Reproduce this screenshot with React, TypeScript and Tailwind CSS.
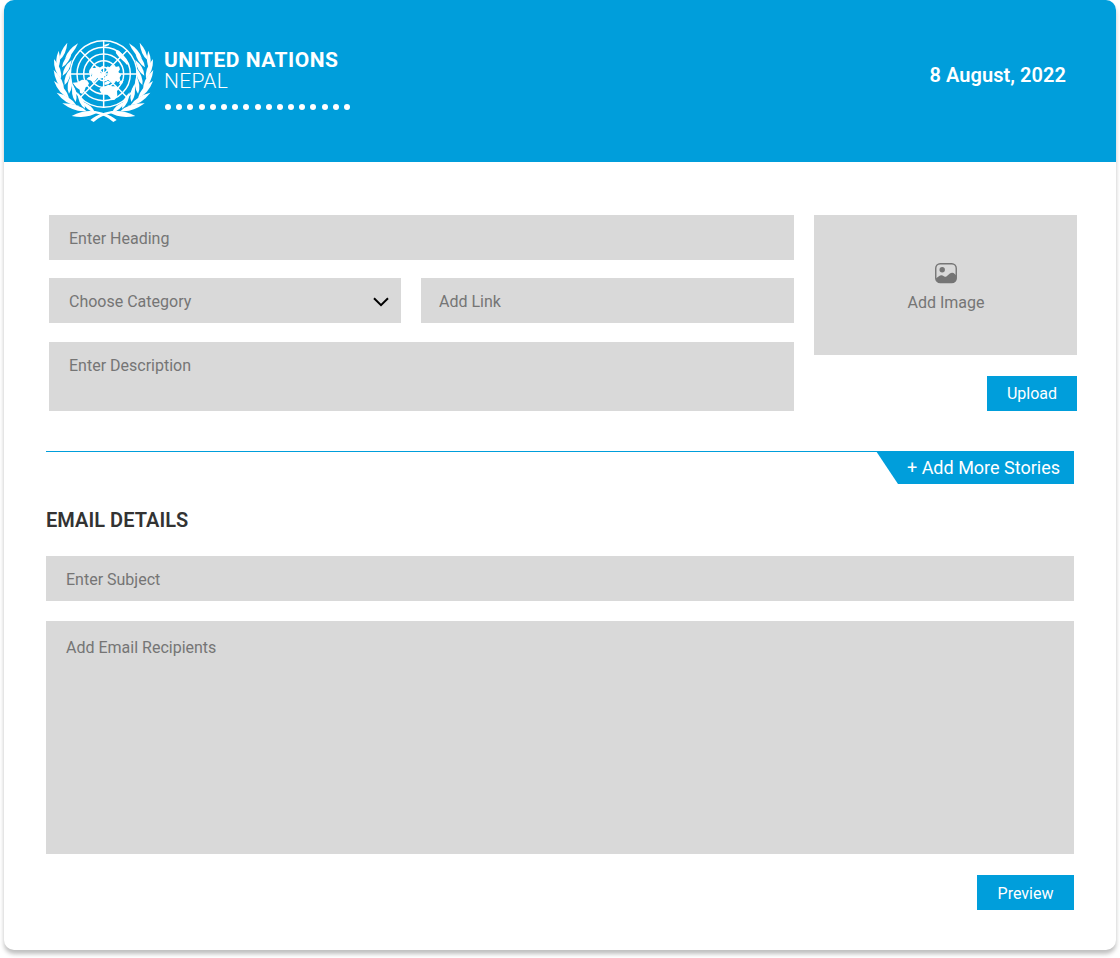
import React from "react";

type Leaf = [number, number, number, number, number];

// Each leaf runs from its base to its tip, with a half-width.
const leaves: Leaf[] = [
  [60, 86, 99, 40, 7.5],
  [44, 90, 67, 38, 7.5],
  [51, 112, 81, 66, 8],
  [38, 116, 41, 62, 7.5],
  [53, 137, 80, 90, 8.5],
  [48, 146, 27, 87, 9.5],
  [59, 165, 77, 114, 8.5],
  [57, 180, 26, 120, 10],
  [72, 191, 77, 139, 8.5],
  [72, 204, 27, 153, 10],
  [92, 216, 83, 163, 8.5],
  [94, 226, 35, 188, 10],
  [120, 236, 97, 187, 8.5],
  [124, 243, 52, 220, 10],
  [150, 248, 110, 214, 8],
  [158, 247, 80, 258, 10.5],
];

function leafPath([x1, y1, x2, y2, w]: Leaf) {
  const dx = x2 - x1;
  const dy = y2 - y1;
  const len = Math.hypot(dx, dy);
  const nx = (-dy / len) * w * 1.5;
  const ny = (dx / len) * w * 1.5;
  const mx = x1 + dx * 0.42;
  const my = y1 + dy * 0.42;
  return `M${x1} ${y1}Q${mx + nx} ${my + ny} ${x2} ${y2}Q${mx - nx} ${my - ny} ${x1} ${y1}Z`;
}

function Branch() {
  return (
    <g fill="#fff">
      {leaves.map((leaf, i) => (
        <path key={i} d={leafPath(leaf)} />
      ))}
      <path d="M140 242C168 244 194 253 215 270L205 276C190 262 168 251 140 248Z" />
    </g>
  );
}

function Emblem() {
  return (
    <svg className="h-[84px] w-[102px] shrink-0" viewBox="24 27 306 252" aria-hidden="true">
      <g fill="none" stroke="#fff" strokeWidth="4.4">
        <circle cx="176" cy="132" r="100" />
        <circle cx="176" cy="132" r="80" />
        <circle cx="176" cy="132" r="60" />
        <circle cx="176" cy="132" r="40" />
        <circle cx="176" cy="132" r="20" />
        <path d="M176 32V232M76 132H276M105 61L247 203M247 61L105 203" />
      </g>
      <g fill="#fff">
        <path d="M133 120L140 113L150 114L158 109L166 113L172 107L177 114L169 119L166 127L172 134L176 143L166 146L158 143L153 149L144 146L139 139L143 132L132 128Z" />
        <path d="M183 116L188 109L196 113L202 106L211 111L222 109L225 118L220 126L229 134L224 143L226 152L218 157L211 151L205 158L196 154L188 149L180 151L176 144L184 139L190 132L187 123Z" />
        <path d="M139 139L154 148L148 156L135 151L124 148L130 142Z" />
        <path d="M83 158L98 157L111 149L126 151L132 160L128 169L122 172L119 181L112 192L105 188L104 179L95 173L88 165Z" />
        <path d="M163 178L170 171L181 169L190 164L201 169L212 169L221 176L216 184L217 198L209 209L199 211L195 202L187 194L176 191L168 188Z" />
        <path d="M212 59L222 62L231 72L239 83L250 97L247 106L239 97L229 88L221 80L213 70Z" />
        <path d="M225 153L236 150L231 162L222 161ZM178 158L188 152L198 156L190 163L179 165Z" />
        <path d="M177 45L194 40L191 46L179 50Z" />
      </g>
      <Branch />
      <g transform="translate(351 0) scale(-1 1)">
        <Branch />
      </g>
    </svg>
  );
}

function ImageIcon() {
  return (
    <svg className="h-[21px] w-6" viewBox="0 0 24 21" fill="none" aria-hidden="true">
      <rect x="1.75" y="0.75" width="20.5" height="18.9" rx="4.5" stroke="#757575" strokeWidth="1.4" />
      <circle cx="8.2" cy="6.8" r="2.7" fill="#757575" />
      <path
        d="M1.8 15.4L4.5 13.4Q7.5 11.4 9.5 13.1Q11 14.5 13 12.9L15.5 10.7Q18.6 8.6 20.8 11L22.2 12.4V15.5Q22.2 19.8 17.8 19.8H6.2Q2.5 19.8 1.8 15.4Z"
        fill="#757575"
      />
    </svg>
  );
}

const field = "flex bg-[#d9d9d9] text-base leading-[19px] text-[#757575]";

export default function App() {
  return (
    <div className="h-[958px] w-[1120px] overflow-hidden bg-white px-1 font-[Roboto,sans-serif]">
      <main className="h-[950px] overflow-hidden rounded-[10px] bg-white shadow-[0_4px_4px_rgba(0,0,0,0.25)]">
        <header className="flex h-[162px] items-start justify-between bg-[#009edb] pr-[50px] pl-[49px] text-white">
          <div className="flex pt-[39px]">
            <Emblem />
            <div className="ml-[9px] pt-[11px]">
              <div className="text-[21px] leading-[21px] font-bold tracking-[0.5px] whitespace-nowrap">UNITED NATIONS</div>
              <div className="text-[21px] leading-[21px] font-[350] tracking-[0.3px]">NEPAL</div>
              <div className="mt-[12px] ml-px flex gap-[5.2px]">
                {Array.from({ length: 17 }, (_, i) => (
                  <span key={i} className="size-[6px] rounded-full bg-white" />
                ))}
              </div>
            </div>
          </div>
          <time className="pt-[63px] text-xl leading-6 font-semibold tracking-[0.05px]">8 August, 2022</time>
        </header>

        <section className="flex gap-5 pt-[53px] pl-[45px]">
          <div className="flex w-[745px] flex-col">
            <div className={`${field} h-[45px] items-center pt-[2px] pl-5`}>Enter Heading</div>
            <div className="mt-[18px] flex gap-5">
              <div className={`${field} h-[45px] w-[352px] items-center justify-between pt-[2px] pr-3 pl-5`}>
                Choose Category
                <svg className="h-[10px] w-4" viewBox="0 0 16 10" fill="none" aria-hidden="true">
                  <path d="M1 1.2L8 8.1L15 1.2" stroke="#000" strokeWidth="2" />
                </svg>
              </div>
              <div className={`${field} h-[45px] flex-1 items-center pt-[2px] pl-[18px]`}>Add Link</div>
            </div>
            <div className={`${field} mt-[19px] h-[69px] pt-[14px] pl-5`}>Enter Description</div>
          </div>
          <div className="flex w-[263px] flex-col items-end">
            <div className={`${field} h-[140px] w-full flex-col items-center pt-12 pl-px`}>
              <ImageIcon />
              <span className="mt-[9px]">Add Image</span>
            </div>
            <button className="mt-[21px] h-[35px] w-[90px] bg-[#009edb] text-base leading-[19px] text-white">Upload</button>
          </div>
        </section>

        <section className="mt-10 mr-[42px] ml-[42px]">
          <div className="flex h-[33px] justify-end border-t border-[#009edb]">
            <button className="-mt-px h-[33px] w-[198px] bg-[#009edb] pl-[17px] text-lg leading-[33px] whitespace-nowrap text-white [clip-path:polygon(0_0,100%_0,100%_100%,22px_100%)]">
              + Add More Stories
            </button>
          </div>
          <h2 className="mt-6 text-xl leading-6 font-semibold tracking-[0.04px] text-[#333]">EMAIL DETAILS</h2>
          <div className={`${field} mt-6 h-[45px] items-center pt-[2px] pl-5`}>Enter Subject</div>
          <div className={`${field} mt-5 h-[233px] pt-[17px] pl-5`}>Add Email Recipients</div>
          <div className="mt-[21px] flex justify-end">
            <button className="h-[35px] w-[97px] bg-[#009edb] pt-[2px] text-base leading-[19px] text-white">Preview</button>
          </div>
        </section>
      </main>
    </div>
  );
}
